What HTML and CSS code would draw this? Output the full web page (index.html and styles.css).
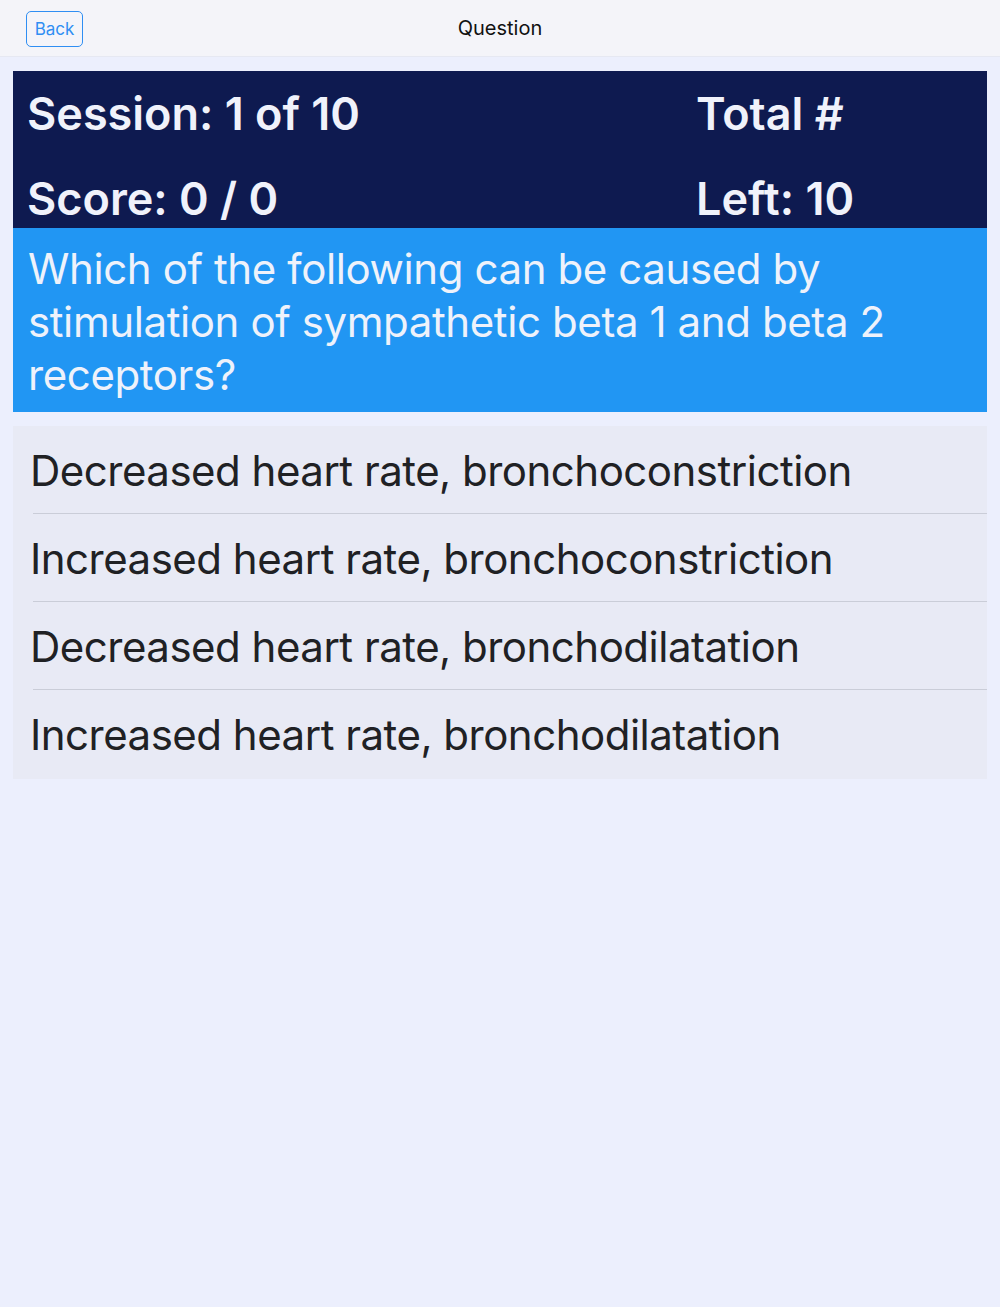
FILE: index.html
```html
<!DOCTYPE html>
<html>
<head>
<meta charset="utf-8">
<link rel="stylesheet" href="styles.css">
</head>
<body>
<header class="nav">
  <button class="back">Back</button>
  <div class="title">Question</div>
</header>
<main class="content">
  <section class="stats">
    <div class="stat-row">
      <div class="stat-left">Session: 1 of 10</div>
      <div class="stat-right">Total #</div>
    </div>
    <div class="stat-row">
      <div class="stat-left">Score: 0 / 0</div>
      <div class="stat-right">Left: 10</div>
    </div>
  </section>
  <section class="question">Which of the following can be caused by stimulation of sympathetic beta 1 and beta 2 receptors?</section>
  <ul class="answers">
    <li class="answer">Decreased heart rate, bronchoconstriction</li>
    <li class="answer">Increased heart rate, bronchoconstriction</li>
    <li class="answer">Decreased heart rate, bronchodilatation</li>
    <li class="answer">Increased heart rate, bronchodilatation</li>
  </ul>
</main>
</body>
</html>
```
FILE: styles.css
```css
html, body {
  margin: 0;
  padding: 0;
}
body {
  background: #eceffd;
  font-family: Inter, "Noto Sans", sans-serif;
  width: 1000px;
  height: 1307px;
  overflow: hidden;
}
.nav {
  height: 57px;
  background: #f4f4f9;
  display: flex;
  align-items: center;
  position: relative;
  border-bottom: 1px solid #e6e8f2;
  box-sizing: border-box;
}
.back {
  margin-left: 26px;
  margin-top: 1px;
  width: 57px;
  height: 36px;
  border: 1.5px solid #2f8ef3;
  border-radius: 5px;
  background: transparent;
  color: #2f8ef3;
  font-family: Inter, sans-serif;
  font-size: 17px;
  padding: 0;
}
.title {
  position: absolute;
  left: 0;
  right: 0;
  top: 16px;
  text-align: center;
  font-size: 20px;
  color: #111;
  pointer-events: none;
}
.content {
  padding: 14px 13px 0 13px;
}
.stats {
  background: #0e1a50;
  color: #f0f2fb;
  height: 157px;
  display: flex;
  flex-direction: column;
  justify-content: space-between;
  padding: 14px 0 0 0;
  box-sizing: border-box;
}
.stat-row {
  display: flex;
  font-weight: 600;
  font-size: 45px;
  line-height: 58px;
  letter-spacing: 0;
}
.stat-left {
  width: 683px;
  padding-left: 14px;
  box-sizing: border-box;
}
.stat-right {
  flex: 1;
}
.question {
  background: #2196f3;
  color: #eef2fb;
  font-size: 42px;
  line-height: 53px;
  padding: 14px 15px 17px 15px;
  height: 184px;
  box-sizing: border-box;
  letter-spacing: -0.4px;
}
.answers {
  list-style: none;
  margin: 14px 0 0 0;
  padding: 0 0 1px 0;
  background: #e8eaf5;
}
.answer {
  height: 88px;
  box-sizing: border-box;
  display: flex;
  align-items: center;
  padding-left: 17px;
  font-size: 42px;
  color: #202124;
  letter-spacing: -0.5px;
  background: linear-gradient(#cacdd8, #cacdd8) no-repeat 20px 100% / calc(100% - 20px) 1.5px;
}
.answer:last-child {
  background: none;
}
```
